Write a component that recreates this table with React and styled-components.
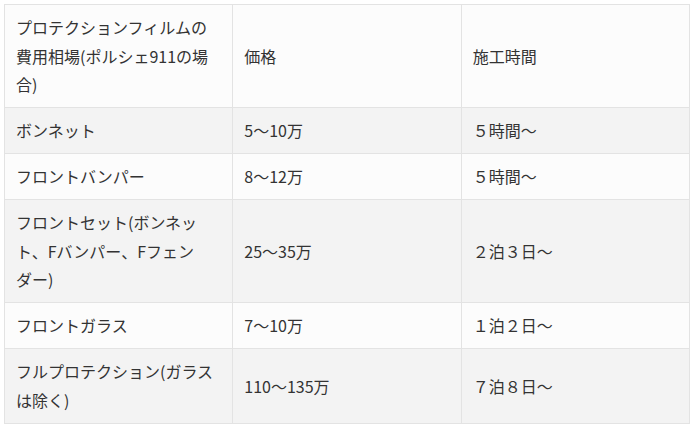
import React from "react";
import styled, { createGlobalStyle } from "styled-components";

const rows = [
  { item: "ボンネット", price: "5～10万", time: "５時間～" },
  { item: "フロントバンパー", price: "8～12万", time: "５時間～" },
  { item: "フロントセット(ボンネット、Fバンパー、Fフェンダー)", price: "25～35万", time: "２泊３日～" },
  { item: "フロントガラス", price: "7～10万", time: "１泊２日～" },
  { item: "フルプロテクション(ガラスは除く)", price: "110～135万", time: "７泊８日～" },
];

const App = () => {
  return (
    <>
      <GlobalStyle />
      <Page lang="ja">
        <PriceTable>
          <thead>
            <Row>
              <Cell as="th">プロテクションフィルムの費用相場(ポルシェ911の場合)</Cell>
              <Cell as="th">価格</Cell>
              <Cell as="th">施工時間</Cell>
            </Row>
          </thead>
          <tbody>
            {rows.map((r, i) => (
              <Row key={r.item} $shaded={i % 2 === 0}>
                <Cell>{r.item}</Cell>
                <Cell>{r.price}</Cell>
                <Cell>{r.time}</Cell>
              </Row>
            ))}
          </tbody>
        </PriceTable>
      </Page>
    </>
  );
};

export default App;

const GlobalStyle = createGlobalStyle`
  body{
    margin: 0;
    background: #fff;
    font-family: "Noto Sans CJK JP", "Noto Sans", sans-serif;
  }
`;

const Page = styled.div`
  padding: 4px 0 0 4px;
`;

const PriceTable = styled.table`
  width: 686px;
  table-layout: fixed;
  border-collapse: collapse;
  border: 1px solid #e3e3e3;
`;

const Row = styled.tr`
  background: ${(p) => (p.$shaded ? "#f3f3f3" : "#fcfcfc")};
`;

const Cell = styled.td`
  width: 33.33%;
  padding: 8.25px 11px 8.25px 11px;
  border: 1px solid #e3e3e3;
  color: #333;
  font-size: 16px;
  font-weight: 400;
  line-height: 28.5px;
  line-break: strict;
  text-align: left;
  vertical-align: middle;
`;
